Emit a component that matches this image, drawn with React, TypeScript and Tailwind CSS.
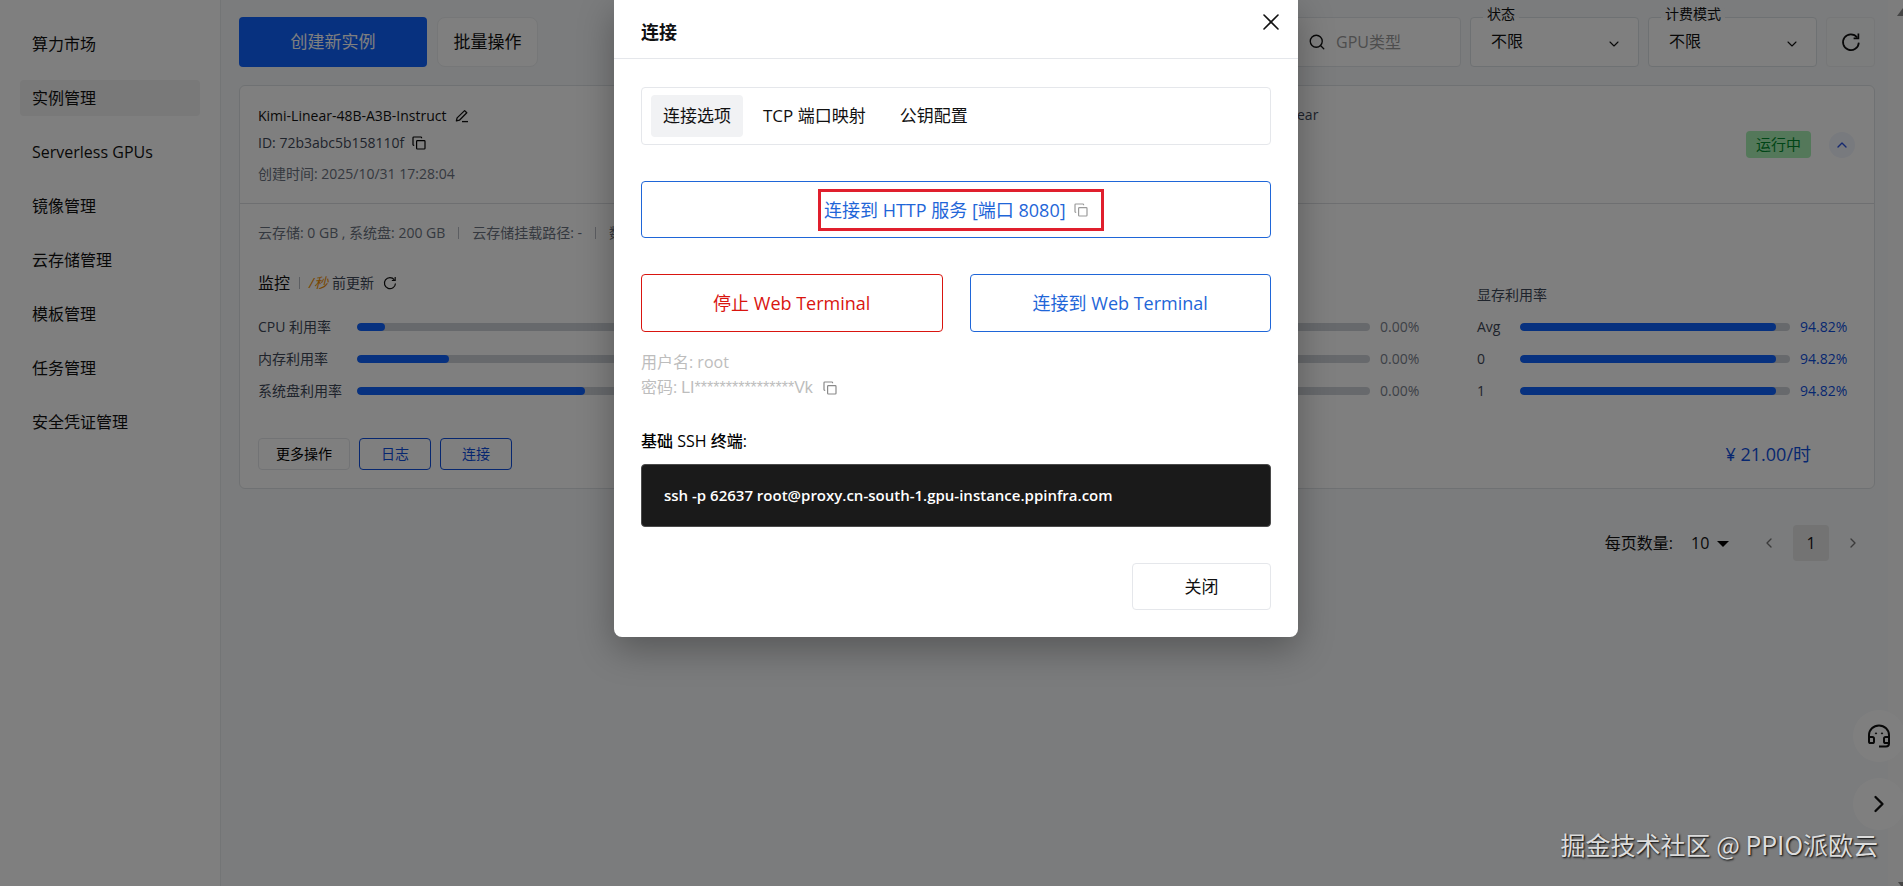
import { ChevronDown, ChevronLeft, ChevronRight, ChevronUp, Search, X } from "lucide-react"

const navItems = [
  "算力市场",
  "实例管理",
  "Serverless GPUs",
  "镜像管理",
  "云存储管理",
  "模板管理",
  "任务管理",
  "安全凭证管理",
]

const hostMetrics = [
  { label: "CPU 利用率", value: 4.8 },
  { label: "内存利用率", value: 15.7 },
  { label: "系统盘利用率", value: 38.8 },
]

const memoryMetrics = [
  { label: "Avg", value: 94.82 },
  { label: "0", value: 94.82 },
  { label: "1", value: 94.82 },
]

function CopyIcon({ className }: { className?: string }) {
  return (
    <svg viewBox="0 0 14 14" fill="none" stroke="currentColor" strokeWidth="1.2" className={className}>
      <rect x="4.6" y="4.6" width="8.4" height="8.4" rx="0.8" />
      <path d="M2.2 9.4H1.8a.8.8 0 0 1-.8-.8V1.8A.8.8 0 0 1 1.8 1h7a.8.8 0 0 1 .8.8v.4" />
    </svg>
  )
}

function EditIcon({ className }: { className?: string }) {
  return (
    <svg viewBox="0 0 14 14" fill="none" stroke="currentColor" strokeWidth="1.3" strokeLinejoin="round" className={className}>
      <path d="M9.6 1.6 11.8 3.8 4.4 11.2l-3 .7.7-3z" />
      <path d="M7 12.6h6" />
    </svg>
  )
}

function ReloadIcon({ className }: { className?: string }) {
  return (
    <svg viewBox="0 0 20 20" fill="none" stroke="currentColor" strokeWidth="1.7" className={className}>
      <path d="M17.8 10.6A7.9 7.9 0 1 1 16.2 5.4" />
      <path d="M17.4 1.6v4.8h-4.8" />
    </svg>
  )
}

function HeadsetIcon({ className }: { className?: string }) {
  return (
    <svg viewBox="0 0 24 24" fill="none" stroke="currentColor" strokeWidth="2" strokeLinejoin="round" className={className}>
      <path d="M2 16V11a10 9.6 0 0 1 20 0v8.4a3 3 0 0 1-3 3h-7" />
      <path d="M2 13h3.4a1.6 1.6 0 0 1 1.6 1.6v2.8A1.6 1.6 0 0 1 5.4 19H3.6A1.6 1.6 0 0 1 2 17.4z" />
      <path d="M22 13h-3.4a1.6 1.6 0 0 0-1.6 1.6v2.8a1.6 1.6 0 0 0 1.6 1.6H22z" />
      <circle cx="9" cy="9.4" r="0.6" fill="currentColor" strokeWidth="1" />
      <circle cx="15" cy="9.4" r="0.6" fill="currentColor" strokeWidth="1" />
    </svg>
  )
}

function Bar({ value }: { value: number }) {
  return (
    <div className="h-2 flex-1 overflow-hidden rounded-full bg-[#cfd2d8]">
      <div className="h-full rounded-full bg-[#0f62fe]" style={{ width: `${value}%` }} />
    </div>
  )
}

function FilterSelect({ id, label }: { id: string; label: string }) {
  return (
    <div className="relative h-[50px] w-[169px] rounded border border-[#dde2e6] bg-white">
      <label
        htmlFor={id}
        className="absolute -top-[14px] left-3 bg-gradient-to-b from-[#f6f8fa] from-70% to-white to-70% px-1 text-sm leading-5"
      >
        {label}
      </label>
      <select id={id} className="h-full w-full appearance-none pb-0.5 pl-5 text-base outline-none">
        <option>不限</option>
      </select>
      <ChevronDown className="pointer-events-none absolute top-[18px] right-4 size-4" strokeWidth={1.6} />
    </div>
  )
}

function Sidebar() {
  return (
    <nav className="w-[221px] shrink-0 border-r border-[#e6eaed] bg-white px-5 pt-[26px]">
      <ul className="flex flex-col gap-[18px]">
        {navItems.map((item, index) => (
          <li key={item}>
            <a
              href="#"
              className={`block rounded px-3 text-base leading-9 ${index === 1 ? "bg-[#f2f2f2]" : ""}`}
            >
              {item}
            </a>
          </li>
        ))}
      </ul>
    </nav>
  )
}

function Toolbar() {
  return (
    <div className="flex items-center justify-between">
      <div className="flex gap-[10px]">
        <button className="h-[50px] w-[188px] rounded bg-[#0f62fe] text-[17px] text-white">创建新实例</button>
        <button className="h-[50px] w-[101px] rounded-lg border border-[#eceef0] bg-white text-[17px]">批量操作</button>
      </div>
      <div className="flex gap-[9px]">
        <div className="flex h-[50px] w-[240px] items-center rounded border border-[#e3e7ea] bg-white pl-[86px]">
          <Search className="size-[18px]" strokeWidth={1.8} />
          <input
            aria-label="GPU类型"
            placeholder="GPU类型"
            className="ml-[10px] w-24 text-base outline-none placeholder:text-[#9b9b9b]"
          />
        </div>
        <FilterSelect id="status" label="状态" />
        <FilterSelect id="billing" label="计费模式" />
        <button
          aria-label="刷新"
          className="flex h-[50px] w-[49px] items-center justify-center rounded border border-[#eceef0] bg-[#f9fafb]"
        >
          <ReloadIcon className="size-5" />
        </button>
      </div>
    </div>
  )
}

function InstanceCard() {
  return (
    <section className="mt-[18px] rounded-md border border-[#dfe3e6] bg-white text-sm">
      <div className="flex h-[118px] items-center border-b border-[#dcdfe2] pr-[19px] pl-[18px]">
        <div className="flex-1">
          <h2 className="flex items-center gap-2 leading-[27px]">
            Kimi-Linear-48B-A3B-Instruct <EditIcon className="size-[14px]" />
          </h2>
          <p className="flex items-center gap-2 leading-[27px] text-[#3f4858]">
            ID: 72b3abc5b158110f <CopyIcon className="size-[14px] text-black" />
          </p>
          <p className="pt-1 leading-[27px] text-[#6b7280]">创建时间: 2025/10/31 17:28:04</p>
        </div>
        <p className="w-[449px] self-start pt-[15px] leading-7 text-[#3f4858]">ear</p>
        <span className="rounded bg-[#a8f0b4] px-[10px] text-[15px] leading-[27px] text-[#008a2e]">运行中</span>
        <button
          aria-label="收起"
          className="ml-[18px] flex size-[26px] items-center justify-center rounded-full bg-[#f1f4fc] text-[#2a52e0]"
        >
          <ChevronUp className="size-4" />
        </button>
      </div>

      <div className="px-[18px] pt-[17px] pb-[18px]">
        <div className="flex items-center gap-[13px] leading-6 text-[#6b7280]">
          <span>云存储: 0 GB , 系统盘: 200 GB</span>
          <i className="h-3 w-px bg-[#b8bcc4]" />
          <span>云存储挂载路径: -</span>
          <i className="h-3 w-px bg-[#b8bcc4]" />
          <span>数</span>
        </div>

        <div className="mt-[26px] flex items-center leading-6">
          <h3 className="text-base">监控</h3>
          <i className="mx-[9px] h-3 w-px bg-[#b8bcc4]" />
          <span className="text-[#f08c00] italic">/秒</span>
          <span className="ml-1 text-[#3f4858]">前更新</span>
          <ReloadIcon className="ml-[9px] size-[14px]" />
        </div>

        <div className="flex items-end gap-[50px] pt-3 text-[#3f4858]">
          <ul className="flex-1">
            {hostMetrics.map((metric) => (
              <li key={metric.label} className="flex h-8 items-center pr-[60px]">
                <span className="w-[99px]">{metric.label}</span>
                <Bar value={metric.value} />
              </li>
            ))}
          </ul>
          <ul className="w-[373px]">
            {memoryMetrics.map((metric) => (
              <li key={metric.label} className="flex h-8 items-center gap-[10px] pl-[43px] text-[#7b828e]">
                <Bar value={0} />
                <span className="w-[47px]">0.00%</span>
              </li>
            ))}
          </ul>
          <div className="w-[379px]">
            <h4 className="-mt-6 leading-6">显存利用率</h4>
            <ul className="pt-1">
              {memoryMetrics.map((metric) => (
                <li key={metric.label} className="flex h-8 items-center gap-[10px]">
                  <span className="w-[33px]">{metric.label}</span>
                  <Bar value={metric.value} />
                  <span className="w-14 text-[#0f4fe0]">{metric.value}%</span>
                </li>
              ))}
            </ul>
          </div>
        </div>

        <div className="mt-[31px] flex items-center gap-[9px]">
          <button className="h-8 w-[92px] rounded border border-[#e5e7eb] text-black">更多操作</button>
          <button className="h-8 w-[72px] rounded border border-[#0f4fe0] text-[#0f4fe0]">日志</button>
          <button className="h-8 w-[72px] rounded border border-[#0f4fe0] text-[#0f4fe0]">连接</button>
          <p className="ml-auto pr-[45px] text-lg text-[#0f4fe0]">¥ 21.00/时</p>
        </div>
      </div>
    </section>
  )
}

function Pagination() {
  return (
    <div className="mt-9 flex items-center justify-end pr-[14px]">
      <label htmlFor="page-size">每页数量:</label>
      <div className="relative ml-[18px]">
        <select id="page-size" className="w-[50px] appearance-none outline-none">
          <option>10</option>
        </select>
        <svg viewBox="0 0 12 6" className="pointer-events-none absolute top-[10px] right-3 h-[6px] w-3">
          <path d="M0 0h12L6 6z" />
        </svg>
      </div>
      <button aria-label="上一页" className="ml-5 text-[#777]">
        <ChevronLeft className="size-4" />
      </button>
      <button className="mx-4 size-9 rounded bg-[#e6e6e6]">1</button>
      <button aria-label="下一页" className="text-[#777]">
        <ChevronRight className="size-4" />
      </button>
    </div>
  )
}

function ConnectDialog() {
  return (
    <div
      role="dialog"
      aria-label="连接"
      className="w-[684px] rounded-b-lg bg-white shadow-[0_12px_36px_rgba(0,0,0,0.3)]"
    >
      <header className="flex h-[59px] items-start justify-between border-b border-[#e5e7eb] pr-[13px] pl-[27px]">
        <h2 className="pt-[18px] text-lg leading-7 font-bold">连接</h2>
        <button aria-label="关闭" className="pt-2">
          <X className="size-7" strokeWidth={1.4} />
        </button>
      </header>

      <div className="px-[27px] pt-7 pb-[27px]">
        <div className="flex h-[58px] items-center rounded border border-[#e5e7eb] px-[9px] text-[17px]">
          <button className="h-[42px] rounded bg-[#f1f2f4] px-3">连接选项</button>
          <button className="h-[42px] pr-[22px] pl-5">TCP 端口映射</button>
          <button className="h-[42px] px-3">公钥配置</button>
        </div>

        <div className="mt-9 flex h-[57px] items-center justify-center rounded border border-[#1f66d8] pl-[10px]">
          <div className="flex h-[42px] w-[286px] items-center justify-between border-3 border-[#e01f2d] pr-[13px] pl-[3px]">
            <a href="#" className="text-lg text-[#1f66d8]">
              连接到 HTTP 服务 [端口 8080]
            </a>
            <button aria-label="复制链接" className="text-[#9a9a9a]">
              <CopyIcon className="size-[14px]" />
            </button>
          </div>
        </div>

        <div className="mt-9 grid grid-cols-2 gap-[27px] text-lg">
          <button className="h-[58px] rounded border border-[#d9150f] text-[#d9150f]">停止 Web Terminal</button>
          <button className="h-[58px] rounded border border-[#1f66d8] text-[#1f66d8]">连接到 Web Terminal</button>
        </div>

        <div className="mt-[18px] text-base leading-[25px] text-[#bdbdbd]">
          <p>用户名: root</p>
          <p className="flex items-center">
            密码:
            <span className="mr-[10px] ml-1 font-['Liberation_Sans',sans-serif]">LI****************Vk</span>
            <CopyIcon className="size-[14px] text-[#8a8a8a]" />
          </p>
        </div>

        <h3 className="mt-[27px] leading-7 font-medium text-black">基础 SSH 终端:</h3>
        <code className="mt-[9px] block rounded border border-[#4a4a4a] bg-[#1a1a1a] px-[22px] font-[inherit] text-[15px] leading-[61px] font-semibold text-white">
          ssh -p 62637 root@proxy.cn-south-1.gpu-instance.ppinfra.com
        </code>

        <div className="mt-9 flex justify-end">
          <button className="h-[47px] w-[139px] rounded border border-[#e5e7eb] text-[17px]">关闭</button>
        </div>
      </div>
    </div>
  )
}

function ScrollTrack() {
  return (
    <div className="flex w-[15px] shrink-0 flex-col justify-between overflow-hidden bg-[#fafafa] pt-2">
      <svg viewBox="0 0 12 8" className="ml-[9px] h-2 w-3 shrink-0 text-[#8a8a8a]">
        <path d="M6 0 12 8H0z" fill="currentColor" />
      </svg>
      <svg viewBox="0 0 12 8" className="ml-[10px] h-1 w-3 shrink-0 text-[#8a8a8a]" preserveAspectRatio="xMinYMin slice">
        <path d="M0 0h12L6 8z" fill="currentColor" />
      </svg>
    </div>
  )
}

export default function App() {
  return (
    <div className="relative flex min-h-screen overflow-hidden bg-[#f6f8fa] font-['Open_Sans','Noto_Sans_CJK_SC',sans-serif] text-[#111]">
      <Sidebar />
      <main className="flex-1 pt-[17px] pr-[13px] pl-[18px]">
        <Toolbar />
        <InstanceCard />
        <Pagination />
      </main>
      <ScrollTrack />

      <div className="absolute right-[-2px] bottom-14 flex flex-col gap-4">
        <button aria-label="客服" className="flex size-[52px] items-center justify-center rounded-full bg-white">
          <HeadsetIcon className="size-6" />
        </button>
        <button aria-label="展开" className="flex size-[52px] items-center justify-center rounded-full bg-white">
          <ChevronRight className="size-7" />
        </button>
      </div>

      <div className="absolute inset-0 flex items-start justify-center bg-black/50 pl-[9px]">
        <ConnectDialog />
      </div>

      <p className="absolute right-[25px] bottom-6 font-['Noto_Sans_CJK_SC',sans-serif] text-[25px] leading-9 text-[#dcdcdc] [text-shadow:1px_1px_2px_#000]">
        掘金技术社区 @ PPIO派欧云
      </p>
    </div>
  )
}
